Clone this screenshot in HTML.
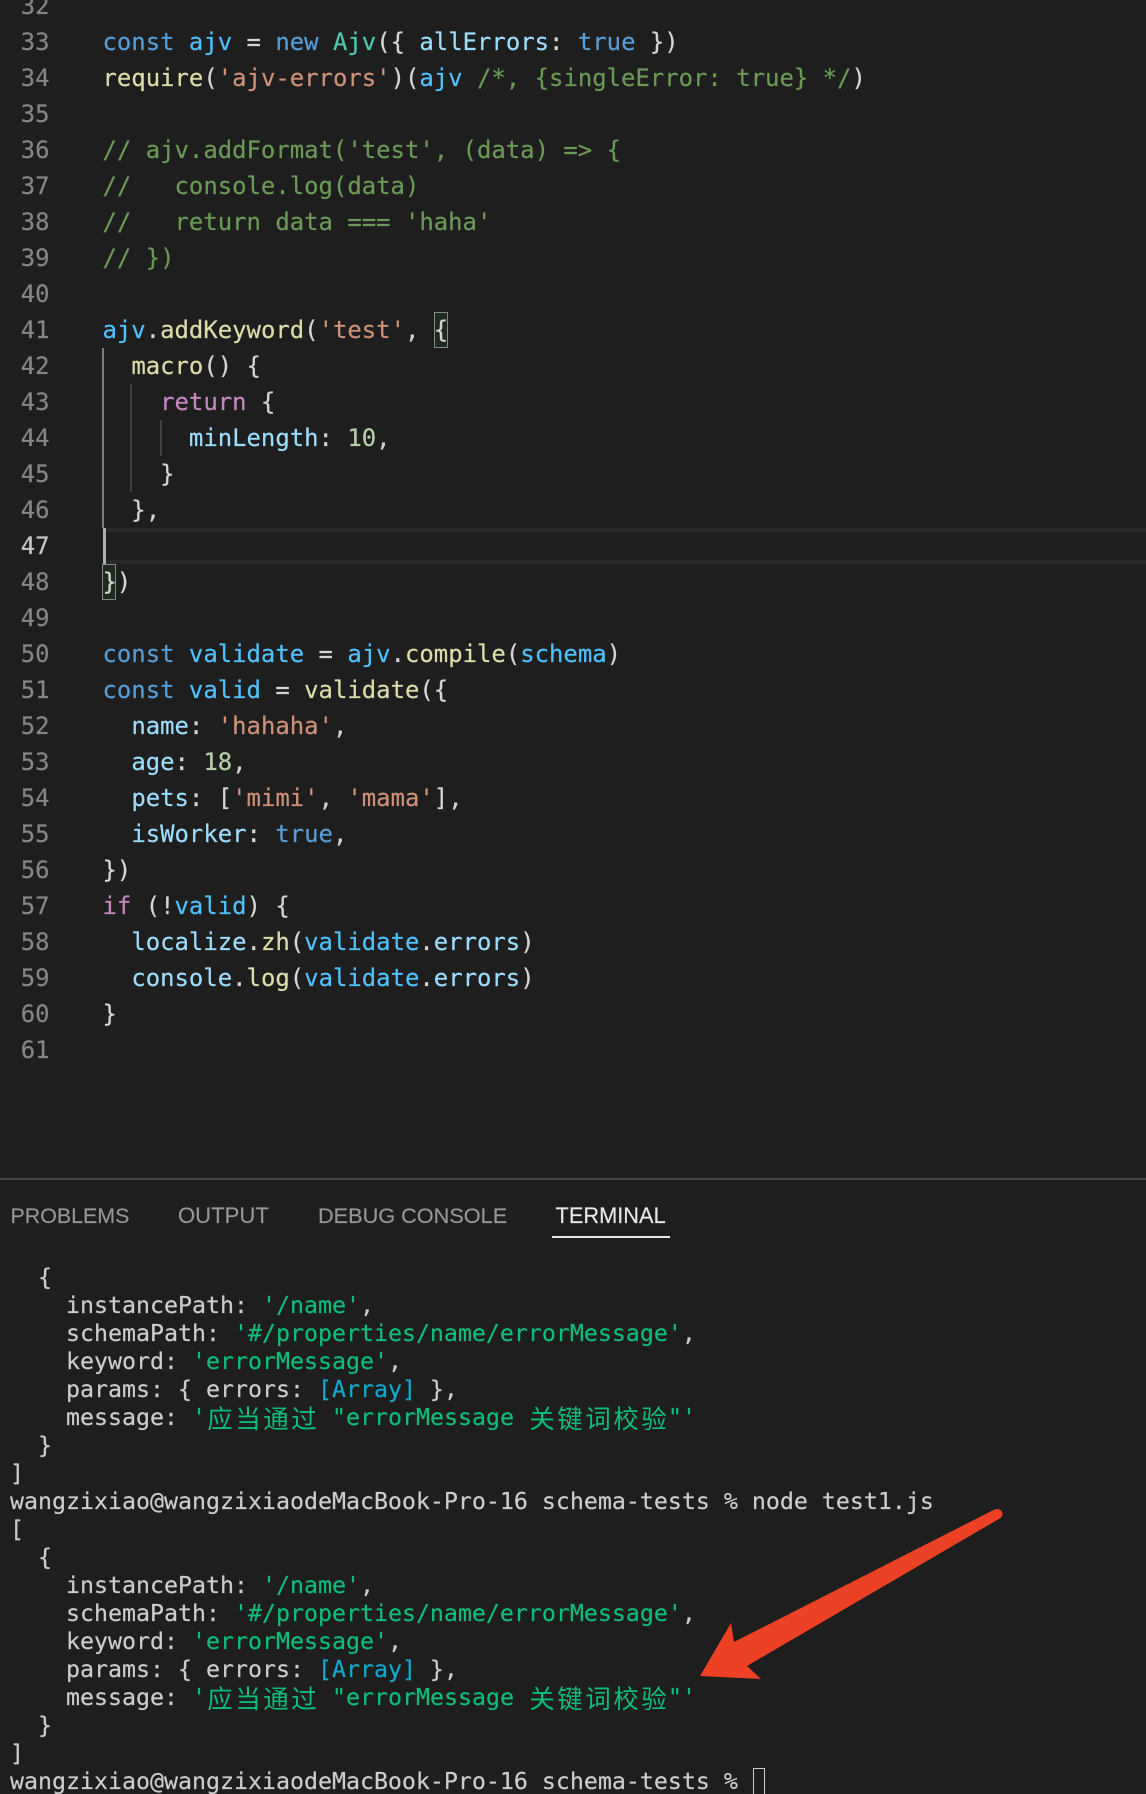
<!DOCTYPE html>
<html><head><meta charset="utf-8"><style>
html,body{margin:0;padding:0;background:#1e1e1e}
#r{position:relative;width:1146px;height:1794px;overflow:hidden;background:#1e1e1e}
.l,.n,.t{position:absolute;white-space:pre;font-family:"DejaVu Sans Mono","Liberation Mono",monospace;font-variant-ligatures:none;-webkit-text-stroke:.2px}
.l{left:102.5px;height:36px;line-height:36px;font-size:23.93px;color:#d4d4d4}
.n{left:0;width:49.5px;text-align:right;height:36px;line-height:36px;font-size:23.87px;color:#858585}
.t{left:10px;height:28px;line-height:28px;font-size:23.26px;color:#ccc}
.k{color:#569cd6}.v{color:#4fc1ff}.p{color:#9cdcfe}.c{color:#4ec9b0}.f{color:#dcdcaa}.s{color:#ce9178}.g{color:#6a9955}.m{color:#b5cea8}.q{color:#c586c0}
.G{color:#0dbc79}.C{color:#11a8cd}
.z{display:inline-block;width:28px;text-align:center;font-family:"Noto Sans CJK SC","WenQuanYi Zen Hei",sans-serif;font-size:25.5px;line-height:28px;vertical-align:top;-webkit-text-stroke:0}
.a{position:absolute}
.tab{position:absolute;top:1202px;height:28px;font:21.8px/28px "Liberation Sans",sans-serif;color:#969696;white-space:pre;-webkit-text-stroke:.15px}
</style></head><body><div id="r">
<div class="a" style="left:104px;top:528px;width:1042px;height:4px;background:#282828"></div>
<div class="a" style="left:104px;top:560px;width:1042px;height:4px;background:#282828"></div>
<div class="a" style="left:102px;top:348px;width:2px;height:180px;background:#7c7c7c"></div>
<div class="a" style="left:130px;top:384px;width:2px;height:108px;background:#404040"></div>
<div class="a" style="left:160px;top:420px;width:2px;height:36px;background:#404040"></div>
<div class="a" style="left:102.5px;top:528px;width:3.5px;height:36px;background:#aeafad"></div>
<div class="a" style="left:434px;top:312px;width:14px;height:36px;box-sizing:border-box;background:#1f2b1f;border:1.3px solid #888"></div>
<div class="a" style="left:102px;top:564px;width:14px;height:36px;box-sizing:border-box;background:#1f2b1f;border:1.3px solid #888"></div>

<div class="n" style="top:-12px">32</div>
<div class="n" style="top:24px">33</div><div class="l" style="top:24px"><span class="k">const</span> <span class="v">ajv</span> = <span class="k">new</span> <span class="c">Ajv</span>({ <span class="p">allErrors</span>: <span class="k">true</span> })</div>
<div class="n" style="top:60px">34</div><div class="l" style="top:60px"><span class="f">require</span>(<span class="s">'ajv-errors'</span>)(<span class="v">ajv</span> <span class="g">/*, {singleError: true} */</span>)</div>
<div class="n" style="top:96px">35</div>
<div class="n" style="top:132px">36</div><div class="l g" style="top:132px">// ajv.addFormat('test', (data) =&gt; {</div>
<div class="n" style="top:168px">37</div><div class="l g" style="top:168px">//   console.log(data)</div>
<div class="n" style="top:204px">38</div><div class="l g" style="top:204px">//   return data === 'haha'</div>
<div class="n" style="top:240px">39</div><div class="l g" style="top:240px">// })</div>
<div class="n" style="top:276px">40</div>
<div class="n" style="top:312px">41</div><div class="l" style="top:312px"><span class="v">ajv</span>.<span class="f">addKeyword</span>(<span class="s">'test'</span>, {</div>
<div class="n" style="top:348px">42</div><div class="l" style="top:348px">  <span class="f">macro</span>() {</div>
<div class="n" style="top:384px">43</div><div class="l" style="top:384px">    <span class="q">return</span> {</div>
<div class="n" style="top:420px">44</div><div class="l" style="top:420px">      <span class="p">minLength</span>: <span class="m">10</span>,</div>
<div class="n" style="top:456px">45</div><div class="l" style="top:456px">    }</div>
<div class="n" style="top:492px">46</div><div class="l" style="top:492px">  },</div>
<div class="n" style="top:528px;color:#c6c6c6">47</div>
<div class="n" style="top:564px">48</div><div class="l" style="top:564px">})</div>
<div class="n" style="top:600px">49</div>
<div class="n" style="top:636px">50</div><div class="l" style="top:636px"><span class="k">const</span> <span class="v">validate</span> = <span class="v">ajv</span>.<span class="f">compile</span>(<span class="v">schema</span>)</div>
<div class="n" style="top:672px">51</div><div class="l" style="top:672px"><span class="k">const</span> <span class="v">valid</span> = <span class="f">validate</span>({</div>
<div class="n" style="top:708px">52</div><div class="l" style="top:708px">  <span class="p">name</span>: <span class="s">'hahaha'</span>,</div>
<div class="n" style="top:744px">53</div><div class="l" style="top:744px">  <span class="p">age</span>: <span class="m">18</span>,</div>
<div class="n" style="top:780px">54</div><div class="l" style="top:780px">  <span class="p">pets</span>: [<span class="s">'mimi'</span>, <span class="s">'mama'</span>],</div>
<div class="n" style="top:816px">55</div><div class="l" style="top:816px">  <span class="p">isWorker</span>: <span class="k">true</span>,</div>
<div class="n" style="top:852px">56</div><div class="l" style="top:852px">})</div>
<div class="n" style="top:888px">57</div><div class="l" style="top:888px"><span class="q">if</span> (!<span class="v">valid</span>) {</div>
<div class="n" style="top:924px">58</div><div class="l" style="top:924px">  <span class="p">localize</span>.<span class="f">zh</span>(<span class="v">validate</span>.<span class="p">errors</span>)</div>
<div class="n" style="top:960px">59</div><div class="l" style="top:960px">  <span class="p">console</span>.<span class="f">log</span>(<span class="v">validate</span>.<span class="p">errors</span>)</div>
<div class="n" style="top:996px">60</div><div class="l" style="top:996px">}</div>
<div class="n" style="top:1032px">61</div>

<div class="a" style="left:0;top:1178px;width:1146px;height:2px;background:#444"></div>
<div class="tab" style="left:10.5px;font-size:21.4px">PROBLEMS</div>
<div class="tab" style="left:178px;font-size:22.1px">OUTPUT</div>
<div class="tab" style="left:318px;font-size:21.7px">DEBUG CONSOLE</div>
<div class="tab" style="left:555.5px;color:#e7e7e7">TERMINAL</div>
<div class="a" style="left:552px;top:1236px;width:118px;height:2px;background:#e7e7e7"></div>

<div class="t" style="top:1264px">  {</div>
<div class="t" style="top:1292px">    instancePath: <span class="G">'/name'</span>,</div>
<div class="t" style="top:1320px">    schemaPath: <span class="G">'#/properties/name/errorMessage'</span>,</div>
<div class="t" style="top:1348px">    keyword: <span class="G">'errorMessage'</span>,</div>
<div class="t" style="top:1376px">    params: { errors: <span class="C">[Array]</span> },</div>
<div class="t" style="top:1404px">    message: <span class="G">'<span class="z">应</span><span class="z">当</span><span class="z">通</span><span class="z">过</span> "errorMessage <span class="z">关</span><span class="z">键</span><span class="z">词</span><span class="z">校</span><span class="z">验</span>"'</span></div>
<div class="t" style="top:1432px">  }</div>
<div class="t" style="top:1460px">]</div>
<div class="t" style="top:1488px">wangzixiao@wangzixiaodeMacBook-Pro-16 schema-tests % node test1.js</div>
<div class="t" style="top:1516px">[</div>
<div class="t" style="top:1544px">  {</div>
<div class="t" style="top:1572px">    instancePath: <span class="G">'/name'</span>,</div>
<div class="t" style="top:1600px">    schemaPath: <span class="G">'#/properties/name/errorMessage'</span>,</div>
<div class="t" style="top:1628px">    keyword: <span class="G">'errorMessage'</span>,</div>
<div class="t" style="top:1656px">    params: { errors: <span class="C">[Array]</span> },</div>
<div class="t" style="top:1684px">    message: <span class="G">'<span class="z">应</span><span class="z">当</span><span class="z">通</span><span class="z">过</span> "errorMessage <span class="z">关</span><span class="z">键</span><span class="z">词</span><span class="z">校</span><span class="z">验</span>"'</span></div>
<div class="t" style="top:1712px">  }</div>
<div class="t" style="top:1740px">]</div>
<div class="t" style="top:1768px">wangzixiao@wangzixiaodeMacBook-Pro-16 schema-tests %</div>
<div class="a" style="left:753px;top:1768px;width:10px;height:28px;border:1.5px solid #ccc;box-sizing:content-box"></div>

<svg class="a" style="left:0;top:0" width="1146" height="1794" viewBox="0 0 1146 1794">
<path d="M700 1676 L731 1623 L734 1642 L994.5 1509.5 Q999 1508 1001.5 1511 Q1004 1515 1000.5 1518 L747 1666 L761 1679 Z" fill="#ec4125"/>
</svg>
</div></body></html>
